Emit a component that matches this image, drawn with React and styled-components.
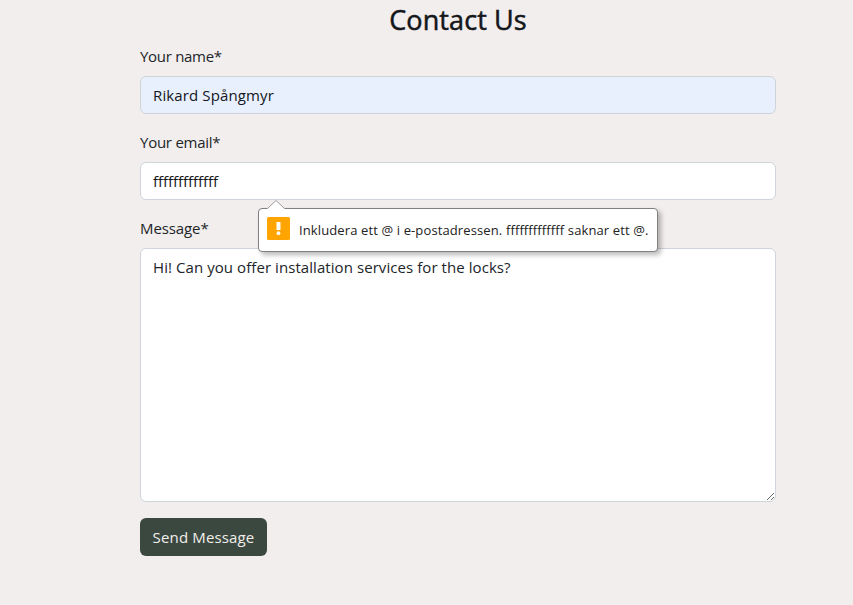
import React from "react";
import styled, { createGlobalStyle } from "styled-components";

const GlobalStyle = createGlobalStyle`
  *, *::before, *::after { box-sizing: border-box; }
  body {
    margin: 0;
    background: #f2eeed;
    color: #212529;
    font-family: "Open Sans", "Noto Sans", sans-serif;
    font-size: 15px;
    line-height: 24px;
    overflow: hidden;
  }
`;

const Page = styled.main`
  width: 636px;
  margin-left: 140px;
  padding-top: 3px;
`;

const Title = styled.h2`
  margin: 0 0 7px;
  height: 34px;
  line-height: 34px;
  font-size: 27px;
  font-weight: 500;
  -webkit-text-stroke: 0.5px #14161a;
  letter-spacing: ${(p) => p.$spacing}px;
  text-align: center;
  color: #14161a;
`;

const Field = styled.div`
  position: relative;
  margin-bottom: 16px;
`;

const Label = styled.label`
  display: block;
  width: max-content;
  height: 24px;
  margin-bottom: 8px;
  letter-spacing: ${(p) => p.$spacing}px;
`;

const Input = styled.input`
  display: block;
  width: 100%;
  height: 38px;
  padding: 6px 12px;
  border: 1px solid #ced4da;
  border-radius: 6px;
  outline: none;
  background: ${(p) => (p.$filled ? "#e8f0fe" : "#fff")};
  color: #14161a;
  font: inherit;
  letter-spacing: ${(p) => p.$spacing}px;
`;

const TextArea = styled.textarea`
  display: block;
  width: 100%;
  height: 254px;
  padding: 6px 12px;
  border: 1px solid #ced4da;
  border-radius: 6px;
  outline: none;
  resize: vertical;
  background: #fff;
  color: #212529;
  font: inherit;
  letter-spacing: ${(p) => p.$spacing}px;
`;

const Button = styled.button`
  display: block;
  width: 127px;
  height: 38px;
  padding: 0;
  border: 0;
  border-radius: 6px;
  background: #3b483f;
  color: #f2eeed;
  font: inherit;
  letter-spacing: ${(p) => p.$spacing}px;
  white-space: nowrap;
`;

const Bubble = styled.div`
  position: absolute;
  z-index: 1;
  top: 78px;
  left: 118px;
  display: flex;
  align-items: center;
  width: 400px;
  height: 44px;
  padding: 0 8px;
  gap: 9px;
  border: 1px solid #808080;
  border-radius: 4px;
  background: #fff;
  box-shadow: 3px 3px 5px rgba(0, 0, 0, 0.28);
`;

const Arrow = styled.svg`
  position: absolute;
  top: -9px;
  left: 8px;
`;

const Warning = styled.svg`
  flex: none;
  margin-top: -3px;
`;

const BubbleText = styled.span`
  font-size: 13px;
  line-height: 20px;
  letter-spacing: ${(p) => p.$spacing}px;
  white-space: nowrap;
  color: #222;
`;

export default function App() {
  return (
    <>
      <GlobalStyle />
      <Page>
        <Title $spacing={0.1}>Contact Us</Title>
        <form noValidate onSubmit={(e) => e.preventDefault()}>
          <Field>
            <Label htmlFor="name" $spacing={-0.3}>Your name*</Label>
            <Input id="name" $filled $spacing={0.12} defaultValue="Rikard Spångmyr" />
          </Field>
          <Field>
            <Label htmlFor="email" $spacing={-0.25}>Your email*</Label>
            <Input id="email" $spacing={-0.05} defaultValue="fffffffffffff" />
            <Bubble role="alert">
              <Arrow width="18" height="10" viewBox="0 0 18 10">
                <path d="M0 10V9L9 0L18 9V10Z" fill="#fff" />
                <path d="M0.5 8.5L9 0.5L17.5 8.5" fill="none" stroke="#999" />
              </Arrow>
              <Warning width="23" height="23" viewBox="0 0 23 23">
                <rect width="23" height="23" rx="1.5" fill="#ffa400" />
                <path d="M9.5 5h4v8h-4z" fill="#fff" />
                <circle cx="11.5" cy="16.2" r="1.9" fill="#fff" />
              </Warning>
              <BubbleText $spacing={0.12}>
                Inkludera ett @ i e-postadressen. fffffffffffff saknar ett @.
              </BubbleText>
            </Bubble>
          </Field>
          <Field>
            <Label htmlFor="message" $spacing={-0.1}>Message*</Label>
            <TextArea
              id="message"
              $spacing={0.07}
              spellCheck={false}
              defaultValue="Hi! Can you offer installation services for the locks?"
            />
          </Field>
          <Button type="submit" $spacing={0.15}>Send Message</Button>
        </form>
      </Page>
    </>
  );
}
